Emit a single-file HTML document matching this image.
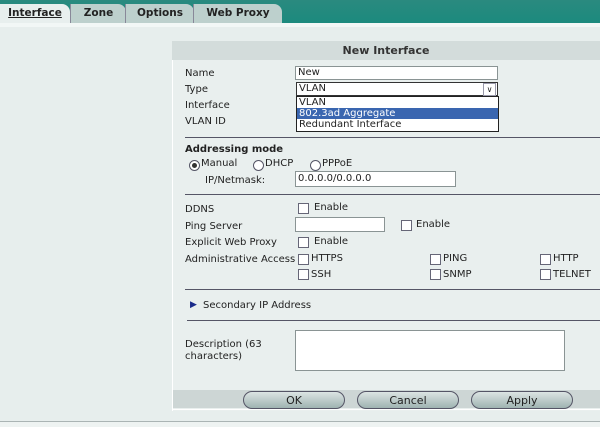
<!DOCTYPE html>
<html><head><style>
body{margin:0;width:600px;height:427px;background:#e7eeed;font-family:"DejaVu Sans","Liberation Sans",sans-serif;font-size:10px;color:#222;position:relative;overflow:hidden}
.a{position:absolute;white-space:nowrap}
.bar{position:absolute;left:0;top:0;width:600px;height:23px;background:linear-gradient(#2a8a7f,#1c8a7e)}
.tab{position:absolute;top:4px;height:19px;background:#bdd0cd;font-weight:bold;font-size:10.5px;line-height:19px;text-align:center;border-left:1px solid #889;border-radius:0 8px 0 0}
.in{position:absolute;background:#fff;border:1px solid #8a9494;box-sizing:border-box}
.sep{position:absolute;left:185px;width:415px;height:1px;background:#556}
.cb{position:absolute;width:9px;height:9px;border:1px solid #667;background:#fff}
.rd{position:absolute;width:9px;height:9px;border:1px solid #556;border-radius:50%;background:#fff}
.btn{position:absolute;top:391px;width:100px;height:16px;border:1px solid #556;border-radius:9px;background:linear-gradient(#dce4e3,#9fb3b1);text-align:center;font-size:11px;line-height:17px}
</style></head><body>
<div class="bar"></div>
<div class="tab" style="left:0;width:70px;background:#e8efee;border:none;text-decoration:underline">Interface</div>
<div class="tab" style="left:70px;width:55px">Zone</div>
<div class="tab" style="left:125px;width:68px">Options</div>
<div class="tab" style="left:193px;width:88px">Web Proxy</div>
<div class="a" style="left:0;top:23px;width:600px;height:4px;background:#f2f7f6"></div>
<div class="a" style="left:172px;top:41px;width:428px;height:370px;background:#e9efee;border-left:1px solid #fff"></div>
<div class="a" style="left:172px;top:41px;width:428px;height:19px;background:#d3dcdb;text-align:center;line-height:19px;font-size:11px;font-weight:bold;color:#333">New Interface</div>
<div class="a" style="left:185px;top:68px">Name</div>
<div class="a" style="left:185px;top:84px">Type</div>
<div class="a" style="left:185px;top:100px">Interface</div>
<div class="a" style="left:185px;top:116px">VLAN ID</div>
<div class="in" style="left:295px;top:66px;width:203px;height:14px;padding-left:2px;line-height:12px">New</div>
<div class="in" style="left:296px;top:82px;width:202px;height:14px;padding-left:2px;line-height:12px;border-color:#333">VLAN<span style="position:absolute;right:1px;top:0;width:11px;height:11px;border:1px solid #99a;font-size:8px;line-height:11px;text-align:center">&#8744;</span></div>
<div class="in" style="left:296px;top:96px;width:203px;height:36px;border-color:#222;line-height:11px">
<div style="padding-left:2px">VLAN</div><div style="padding-left:2px;background:#3a66b0;color:#fff">802.3ad Aggregate</div><div style="padding-left:2px">Redundant Interface</div></div>
<div class="sep" style="top:137px"></div>
<div class="a" style="left:185px;top:144px;font-weight:bold">Addressing mode</div>
<div class="rd" style="left:189px;top:160px"><div style="margin:2px;width:5px;height:5px;border-radius:50%;background:#333"></div></div>
<div class="a" style="left:201px;top:158px">Manual</div>
<div class="rd" style="left:253px;top:160px"></div><div class="a" style="left:265px;top:158px">DHCP</div>
<div class="rd" style="left:310px;top:160px"></div><div class="a" style="left:322px;top:158px">PPPoE</div>
<div class="a" style="left:205px;top:175px">IP/Netmask:</div>
<div class="in" style="left:295px;top:171px;width:161px;height:16px;padding-left:2px;line-height:14px">0.0.0.0/0.0.0.0</div>
<div class="sep" style="top:194px"></div>
<div class="a" style="left:185px;top:204px">DDNS</div>
<div class="cb" style="left:298px;top:203px"></div><div class="a" style="left:314px;top:202px">Enable</div>
<div class="a" style="left:185px;top:221px">Ping Server</div>
<div class="in" style="left:295px;top:217px;width:90px;height:15px"></div>
<div class="cb" style="left:401px;top:220px"></div><div class="a" style="left:416px;top:219px">Enable</div>
<div class="a" style="left:185px;top:237px">Explicit Web Proxy</div>
<div class="cb" style="left:298px;top:237px"></div><div class="a" style="left:314px;top:236px">Enable</div>
<div class="a" style="left:185px;top:254px">Administrative Access</div>
<div class="cb" style="left:298px;top:254px"></div><div class="a" style="left:311px;top:253px">HTTPS</div>
<div class="cb" style="left:430px;top:254px"></div><div class="a" style="left:443px;top:253px">PING</div>
<div class="cb" style="left:540px;top:254px"></div><div class="a" style="left:553px;top:253px">HTTP</div>
<div class="cb" style="left:298px;top:269px"></div><div class="a" style="left:311px;top:269px">SSH</div>
<div class="cb" style="left:430px;top:269px"></div><div class="a" style="left:443px;top:269px">SNMP</div>
<div class="cb" style="left:540px;top:269px"></div><div class="a" style="left:553px;top:269px">TELNET</div>
<div class="sep" style="top:289px"></div>
<div class="a" style="left:190px;top:300px;color:#1a2b8a;font-size:9px">&#9654;</div>
<div class="a" style="left:203px;top:300px">Secondary IP Address</div>
<div class="sep" style="top:320px;left:187px"></div>
<div class="a" style="left:185px;top:339px;line-height:12px">Description (63<br>characters)</div>
<div class="in" style="left:295px;top:330px;width:270px;height:41px"></div>
<div class="a" style="left:173px;top:390px;width:427px;height:18px;background:#cdd6d5"></div>
<div class="a" style="left:173px;top:409px;width:427px;height:1px;background:#fff"></div>
<div class="btn" style="left:243px">OK</div>
<div class="btn" style="left:357px">Cancel</div>
<div class="btn" style="left:471px">Apply</div>
<div class="a" style="left:0;top:421px;width:600px;height:1px;background:#aab4b4"></div>
<div class="a" style="left:0;top:422px;width:600px;height:5px;background:#eef3f2"></div>
</body></html>
